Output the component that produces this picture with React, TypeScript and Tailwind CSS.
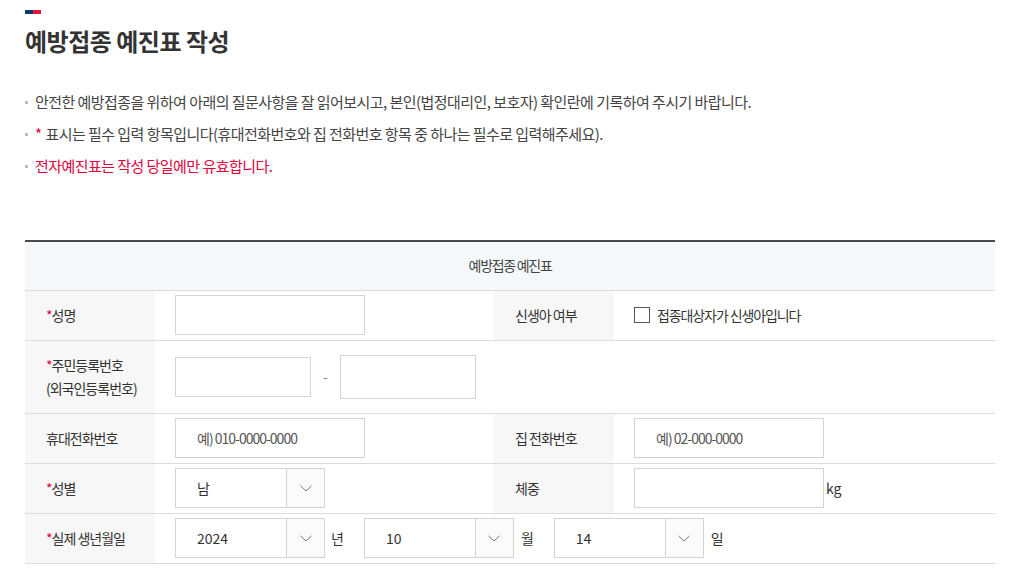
const font = { fontFamily: '"Noto Sans CJK KR", "Noto Sans", sans-serif' }

function Star() {
    return <span className="text-[#e4003a]">*</span>
}

function Chevron() {
    return (
        <svg width="12" height="7" viewBox="0 0 12 7" fill="none">
            <polyline points="0.5,0.8 6,6 11.5,0.8" stroke="#7a7a7a" strokeWidth="1" />
        </svg>
    )
}

function Select({ value }: { value: string }) {
    return (
        <div className="flex h-[40px] w-[150px] border border-[#d3d3d8] bg-white">
            <div className="flex flex-1 items-center pl-[21px] text-[14px] text-[#333]">{value}</div>
            <div className="flex w-[38px] items-center justify-center border-l border-[#d3d3d8] bg-[#fafbfd]">
                <Chevron />
            </div>
        </div>
    )
}

function Input({ w, h = 40, placeholder }: { w: number; h?: number; placeholder?: string }) {
    return (
        <input
            className="border border-[#d3d3d8] bg-white pl-[21px] text-[14px] tracking-[-1px] text-[#333] outline-none placeholder:text-[#555]"
            style={{ width: w, height: h }}
            placeholder={placeholder}
        />
    )
}

export default function App() {
    const label = "bg-[#f7f7f7] pl-[21px] text-left align-middle text-[14px] font-normal tracking-[-1px] text-[#333]"
    const cell = "px-[20px] align-middle"
    return (
        <main className="min-h-screen bg-white pl-[25px] pr-[22px] pt-[10px]" style={font}>
            <div className="flex h-[4px] w-[16px]">
                <span className="w-[8px] bg-[#0f3a6e]" />
                <span className="w-[8px] bg-[#e4173a]" />
            </div>
            <h1 className="mt-[11px] text-[24px] font-bold leading-[32px] tracking-[-0.5px] text-[#333]">
                예방접종 예진표 작성
            </h1>

            <ul className="mt-[34px] flex flex-col gap-[10px] text-[15px] leading-[22px] tracking-[-0.55px] text-[#444]">
                <li className="flex items-center">
                    <span className="mr-[7px] h-[3px] w-[3px] bg-[#bbb]" />
                    안전한 예방접종을 위하여 아래의 질문사항을 잘 읽어보시고, 본인(법정대리인, 보호자) 확인란에 기록하여 주시기 바랍니다.
                </li>
                <li className="flex items-center">
                    <span className="mr-[7px] h-[3px] w-[3px] bg-[#bbb]" />
                    <span className="mr-[4px] text-[#e4003a]">*</span>
                    표시는 필수 입력 항목입니다(휴대전화번호와 집 전화번호 항목 중 하나는 필수로 입력해주세요).
                </li>
                <li className="flex items-center text-[#e4003a]">
                    <span className="mr-[7px] h-[3px] w-[3px] bg-[#bbb]" />
                    전자예진표는 작성 당일에만 유효합니다.
                </li>
            </ul>

            <table className="mt-[63px] w-[970px] table-fixed border-collapse border-t-2 border-[#4a4a4a]">
                <colgroup>
                    <col className="w-[130px]" />
                    <col className="w-[339px]" />
                    <col className="w-[120px]" />
                    <col className="w-[381px]" />
                </colgroup>
                <tbody>
                    <tr className="h-[49px] border-b border-[#dcdcdc] bg-[#f6f9fc]">
                        <th colSpan={4} className="text-center text-[14px] font-normal tracking-[-1.3px] text-[#444]">
                            예방접종 예진표
                        </th>
                    </tr>
                    <tr className="h-[50px] border-b border-[#dcdcdc]">
                        <th className={label}><Star />성명</th>
                        <td className={cell}><Input w={190} /></td>
                        <th className={label}>신생아 여부</th>
                        <td className={cell}>
                            <label className="flex items-center gap-[7px] text-[14px] tracking-[-1.1px] text-[#333]">
                                <span className="h-[16px] w-[16px] border border-[#555] bg-white" />
                                접종대상자가 신생아입니다
                            </label>
                        </td>
                    </tr>
                    <tr className="h-[73px] border-b border-[#dcdcdc]">
                        <th className={`${label} leading-[23px]`}>
                            <Star />주민등록번호
                            <br />
                            (외국인등록번호)
                        </th>
                        <td colSpan={3} className={cell}>
                            <div className="flex items-center">
                                <Input w={136} />
                                <span className="mx-[12px] text-[14px] text-[#888]">-</span>
                                <Input w={136} h={44} />
                            </div>
                        </td>
                    </tr>
                    <tr className="h-[50px] border-b border-[#dcdcdc]">
                        <th className={label}>휴대전화번호</th>
                        <td className={cell}><Input w={190} placeholder="예) 010-0000-0000" /></td>
                        <th className={label}>집 전화번호</th>
                        <td className={cell}><Input w={190} placeholder="예) 02-000-0000" /></td>
                    </tr>
                    <tr className="h-[50px] border-b border-[#dcdcdc]">
                        <th className={label}><Star />성별</th>
                        <td className={cell}><Select value="남" /></td>
                        <th className={label}>체중</th>
                        <td className={cell}>
                            <div className="flex items-center gap-[2px] text-[14px] text-[#333]">
                                <Input w={190} />
                                <span>kg</span>
                            </div>
                        </td>
                    </tr>
                    <tr className="h-[50px] border-b border-[#dcdcdc]">
                        <th className={label}><Star />실제 생년월일</th>
                        <td colSpan={3} className={cell}>
                            <div className="flex items-center text-[14px] text-[#333]">
                                <Select value="2024" />
                                <span className="ml-[6px] mr-[20px]">년</span>
                                <Select value="10" />
                                <span className="ml-[7px] mr-[20px]">월</span>
                                <Select value="14" />
                                <span className="ml-[7px]">일</span>
                            </div>
                        </td>
                    </tr>
                </tbody>
            </table>
        </main>
    )
}
